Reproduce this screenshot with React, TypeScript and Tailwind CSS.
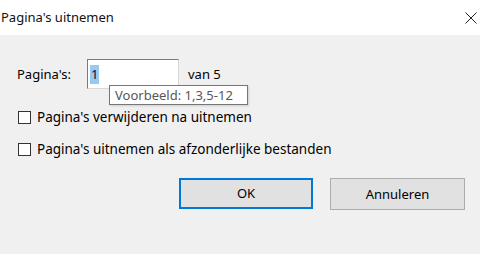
import React from "react";

export default function App() {
  const font = { fontFamily: '"Noto Sans", "Open Sans", sans-serif' };
  return (
    <div
      className="w-[480px] h-[254px] flex flex-col bg-[#f0f0f0] text-black overflow-hidden relative"
      style={font}
    >
      <div className="h-[35px] bg-white flex items-center justify-between shrink-0">
        <span className="pl-[1px] text-[13px] leading-none text-[#111]">Pagina's uitnemen</span>
        <svg width="12" height="12" viewBox="0 0 12 12" className="mr-[3px]">
          <path d="M0.5 0.5 L11.5 11.5 M11.5 0.5 L0.5 11.5" stroke="#222" strokeWidth="1" fill="none" />
        </svg>
      </div>

      <div className="flex-1 flex flex-col">
        <div className="flex items-center pt-[24px] pl-[17px]">
          <span className="w-[70px] text-[13px] leading-none">Pagina's:</span>
          <div className="w-[92px] h-[30px] bg-white border-t border-l border-[#7a7a7a] border-r border-b border-r-[#d9d9d9] border-b-[#d9d9d9] pl-[2px] pt-[1px]">
            <span className="inline-block bg-[#99c9ef] text-[#0a0a3a] text-[13px] leading-[19px] h-[19px] px-[1px]">1</span>
          </div>
          <span className="ml-[9px] text-[13px] leading-none">van 5</span>
        </div>

        <div className="flex flex-col mt-[18px] pl-[18px] gap-[11px]">
          <div className="flex items-center h-[21px] gap-[6px]">
            <div className="w-[13px] h-[13px] border border-[#333] bg-white" />
            <span className="text-[13.5px] leading-none">Pagina's verwijderen na uitnemen</span>
          </div>
          <div className="flex items-center h-[21px] gap-[6px]">
            <div className="w-[13px] h-[13px] border border-[#333] bg-white" />
            <span className="text-[13.5px] leading-none">Pagina's uitnemen als afzonderlijke bestanden</span>
          </div>
        </div>

        <div className="flex justify-end pr-[15px] gap-[17px] mt-[18px]">
          <button className="w-[134px] h-[31px] bg-[#e1e1e1] border-2 border-[#0078d7] text-[13px] leading-none flex items-center justify-center">
            OK
          </button>
          <button className="w-[135px] h-[32px] bg-[#e1e1e1] border border-[#adadad] text-[13px] leading-none flex items-center justify-center">
            Annuleren
          </button>
        </div>
      </div>

      <div className="absolute left-[109px] top-[85px] w-[139px] h-[20px] bg-white border border-[#767676] flex items-center pl-[5px] text-[13px] leading-none text-[#575757] shadow-[1px_1px_2px_rgba(0,0,0,0.15)]">
        Voorbeeld: 1,3,5-12
      </div>
    </div>
  );
}
